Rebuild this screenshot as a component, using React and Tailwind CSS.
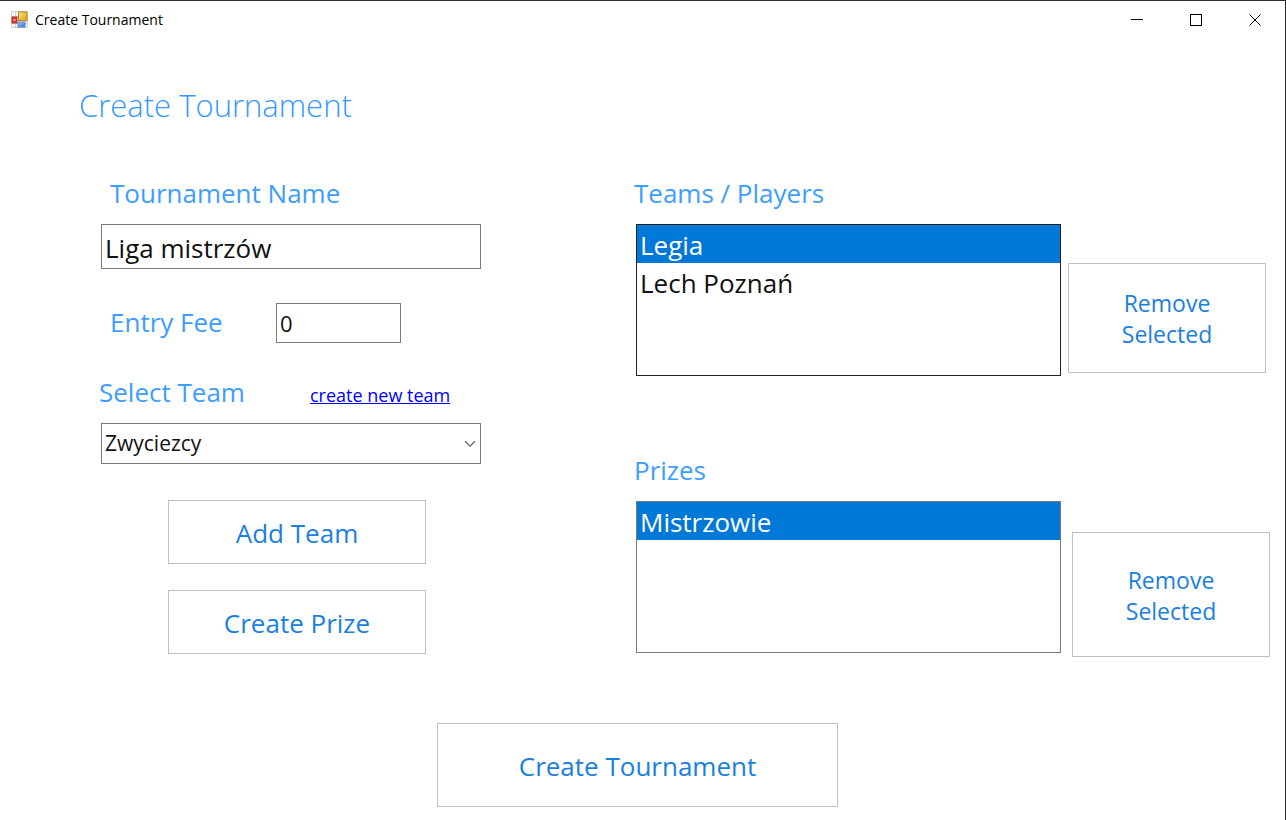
import { useState } from "react";

const labelClass = "block text-[26px] leading-[38px] text-[#3d9eff]";
const fieldClass =
  "rounded-none border border-[#7a7a7a] bg-white text-[#111] outline-none";
const buttonClass =
  "flex items-center justify-center border border-[#c0c0c0] bg-white pt-0.5 text-[#1a80e0] hover:bg-[#f3f9ff]";

function AppIcon() {
  return (
    <svg width="18" height="18" viewBox="0 0 18 18" aria-hidden="true">
      <defs>
        <linearGradient id="gold" x1="0" y1="0" x2="1" y2="1">
          <stop offset="0" stopColor="#ffe88c" />
          <stop offset="1" stopColor="#dd9d00" />
        </linearGradient>
        <linearGradient id="blue" x1="0" y1="0" x2="1" y2="1">
          <stop offset="0" stopColor="#a8ccff" />
          <stop offset="1" stopColor="#2e6be0" />
        </linearGradient>
      </defs>
      <rect x="0.5" y="0.5" width="16" height="16" fill="#f4f4f4" stroke="#d2d2d2" />
      <path d="M4.5 1v15M1 5.5h6M1 12.5h16" stroke="#cfcfcf" />
      <rect x="7.5" y="1" width="8.5" height="8.5" fill="url(#gold)" stroke="#b88a1c" />
      <rect x="1" y="6" width="5" height="6" fill="#d83a2c" stroke="#b3342a" />
      <rect x="2.5" y="8" width="2" height="2" fill="#f2a297" />
      <rect x="7" y="11" width="7" height="5" fill="url(#blue)" stroke="#5a86cc" />
    </svg>
  );
}

function TitleButton({ label, children }) {
  return (
    <button
      type="button"
      aria-label={label}
      className="flex h-full w-[59px] items-center justify-center hover:bg-gray-200"
    >
      <svg
        width="12"
        height="12"
        viewBox="0 0 12 12"
        fill="none"
        stroke="#000"
        aria-hidden="true"
      >
        {children}
      </svg>
    </button>
  );
}

function ListBox({ id, items, border }) {
  const [selected, setSelected] = useState(items[0]);
  return (
    <select
      id={id}
      size={4}
      value={selected}
      onChange={(e) => setSelected(e.target.value)}
      className={`ml-0.5 h-[152px] min-w-0 flex-1 appearance-none overflow-hidden rounded-none border bg-white p-0 text-[26px] text-[#111] outline-none ${border}`}
    >
      {items.map((item) => (
        <option
          key={item}
          value={item}
          className="h-[38px] px-[3px] pt-0.5 pb-0 leading-9 checked:bg-[linear-gradient(#0078d7,#0078d7)] checked:[-webkit-text-fill-color:#fff]"
        >
          {item}
        </option>
      ))}
    </select>
  );
}

export default function App() {
  const [name, setName] = useState("Liga mistrzów");
  const [fee, setFee] = useState("0");

  return (
    <div className="min-h-screen border-t border-r border-[#2b2b2b] bg-white font-['Open_Sans','Noto_Sans',sans-serif]">
      <header className="flex h-[37px] items-center justify-between">
        <div className="flex items-center gap-1.5 pl-[11px]">
          <AppIcon />
          <span className="text-[14px] leading-5 text-black">Create Tournament</span>
        </div>
        <div className="flex h-full pr-px">
          <TitleButton label="Minimize">
            <path d="M0 5.5h12" />
          </TitleButton>
          <TitleButton label="Maximize">
            <rect x="0.5" y="0.5" width="11" height="11" />
          </TitleButton>
          <TitleButton label="Close">
            <path d="M0.5 0.5l11 11M11.5 0.5l-11 11" />
          </TitleButton>
        </div>
      </header>

      <main>
        <h1 className="pt-11 pl-[79px] text-[31px] leading-[46px] font-light text-[#3399ff]">
          Create Tournament
        </h1>

        <form onSubmit={(e) => e.preventDefault()} className="pt-[46px]">
          <div className="flex items-start pl-[99px]">
            <section className="w-[382px] shrink-0">
              <label htmlFor="name" className={`${labelClass} pl-[11px]`}>
                Tournament Name
              </label>
              <div className="mt-3 pl-0.5">
                <input
                  id="name"
                  type="text"
                  value={name}
                  onChange={(e) => setName(e.target.value)}
                  className={`${fieldClass} block h-[45px] w-full px-[3px] pt-0.5 text-[26px]`}
                />
              </div>

              <div className="mt-[34px] flex items-start">
                <label htmlFor="fee" className={`${labelClass} w-[177px] pl-[11px]`}>
                  Entry Fee
                </label>
                <input
                  id="fee"
                  type="text"
                  value={fee}
                  onChange={(e) => setFee(e.target.value)}
                  className={`${fieldClass} h-10 w-[125px] px-[3px] text-[22px]`}
                />
              </div>

              <div className="mt-[30px] flex items-baseline">
                <label htmlFor="team" className={`${labelClass} w-[211px]`}>
                  Select Team
                </label>
                <a href="#new-team" className="text-[18px] leading-6 text-[#0000ff] underline">
                  create new team
                </a>
              </div>
              <div className="mt-3 grid pl-0.5">
                <select
                  id="team"
                  defaultValue="Zwyciezcy"
                  className={`${fieldClass} col-start-1 row-start-1 h-[41px] w-full appearance-none px-[3px] text-[21px]`}
                >
                  <option>Zwyciezcy</option>
                </select>
                <svg
                  className="pointer-events-none col-start-1 row-start-1 mr-[5px] self-center justify-self-end"
                  width="12"
                  height="8"
                  viewBox="0 0 12 8"
                  fill="none"
                  stroke="#666"
                  strokeWidth="1.3"
                  aria-hidden="true"
                >
                  <path d="M1 1.2l5 5 5-5" />
                </svg>
              </div>

              <div className="mt-9 flex flex-col gap-[26px] pr-[55px] pl-[69px]">
                <button type="button" className={`${buttonClass} h-16 text-[26px]`}>
                  Add Team
                </button>
                <button type="button" className={`${buttonClass} h-16 text-[26px]`}>
                  Create Prize
                </button>
              </div>
            </section>

            <div className="ml-[153px] min-w-0 flex-1">
              <section>
                <label htmlFor="teams" className={labelClass}>
                  Teams / Players
                </label>
                <div className="mt-3 flex items-start gap-[7px] pr-[19px]">
                  <ListBox id="teams" items={["Legia", "Lech Poznań"]} border="border-[#222]" />
                  <button
                    type="button"
                    className={`${buttonClass} mt-[39px] h-[110px] w-[198px] px-10 text-[23px] leading-[31px]`}
                  >
                    Remove Selected
                  </button>
                </div>
              </section>

              <section className="mt-[75px]">
                <label htmlFor="prizes" className={labelClass}>
                  Prizes
                </label>
                <div className="mt-3 flex items-start gap-[11px] pr-[15px]">
                  <ListBox id="prizes" items={["Mistrzowie"]} border="border-[#7a7a7a]" />
                  <button
                    type="button"
                    className={`${buttonClass} mt-[31px] h-[125px] w-[198px] px-10 text-[23px] leading-[31px]`}
                  >
                    Remove Selected
                  </button>
                </div>
              </section>
            </div>
          </div>

          <div className="flex justify-center pt-[66px] pr-[10px] pb-3">
            <button type="submit" className={`${buttonClass} h-[84px] w-[401px] text-[26px]`}>
              Create Tournament
            </button>
          </div>
        </form>
      </main>
    </div>
  );
}
